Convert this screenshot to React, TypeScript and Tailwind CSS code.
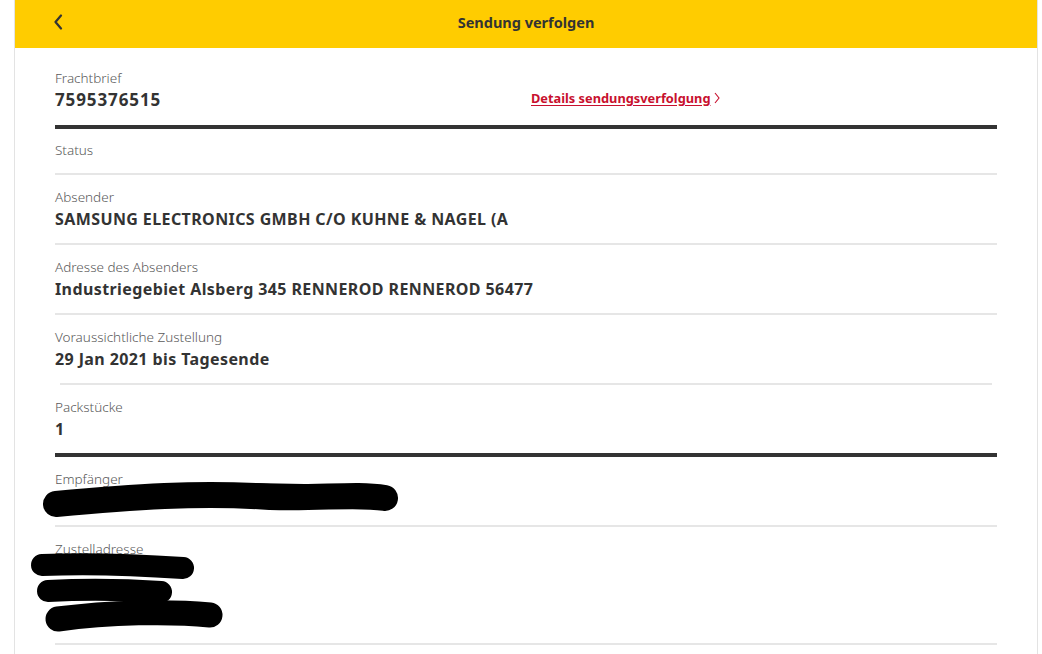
import React from "react";

type Row = { label: string; value?: string; divider: "thin" | "thick" | "inset" };

const rows: Row[] = [
  { label: "Status", divider: "thin" },
  { label: "Absender", value: "SAMSUNG ELECTRONICS GMBH C/O KUHNE & NAGEL (A", divider: "thin" },
  { label: "Adresse des Absenders", value: "Industriegebiet Alsberg 345 RENNEROD RENNEROD 56477", divider: "thin" },
  { label: "Voraussichtliche Zustellung", value: "29 Jan 2021 bis Tagesende", divider: "inset" },
  { label: "Packstücke", value: "1", divider: "thick" },
];

function Divider({ kind }: { kind: Row["divider"] }) {
  if (kind === "thick") return <div className="h-[4px] bg-[#333333]" />;
  if (kind === "inset") return <div className="h-[2px] bg-[#e6e6e6] mx-[5px]" />;
  return <div className="h-[2px] bg-[#e6e6e6]" />;
}

function Label({ children }: { children: React.ReactNode }) {
  return <div className="text-[13.5px] leading-[20px] font-light text-[#5a5a5a]">{children}</div>;
}

function Value({ children }: { children: React.ReactNode }) {
  return <div className="text-[16px] leading-[24px] font-bold tracking-[0.4px] text-[#333333]">{children}</div>;
}

export default function App() {
  return (
    <div className="min-h-[654px] bg-white" style={{ fontFamily: '"Noto Sans", "Open Sans", sans-serif' }}>
      <div className="ml-[14px] w-[1024px] min-h-[654px] border-x border-[#e3e3e3]">
        {/* Header */}
        <div className="h-[48px] bg-[#ffcc00] flex items-center">
          <div className="pl-[38px] pb-[4px]">
            <svg width="10" height="16" viewBox="0 0 10 16">
              <path d="M8 1.5 L2.5 8 L8 14.5" fill="none" stroke="#333" strokeWidth="2.2" strokeLinecap="round" strokeLinejoin="round" />
            </svg>
          </div>
          <div className="flex-1 text-center pr-[48px] pb-[2px] text-[14.5px] font-bold text-[#333333]">
            Sendung verfolgen
          </div>
        </div>

        <div className="px-10">
          {/* Frachtbrief */}
          <div className="flex pt-[20px] pb-[13px]">
            <div className="w-1/2">
              <Label>Frachtbrief</Label>
              <div className="text-[17px] leading-[24px] font-bold tracking-[0.9px] text-[#333333]">7595376515</div>
            </div>
            <div className="w-1/2 pl-[5px] pt-[17px]">
              <span className="inline-flex items-center gap-[4px] text-[12.8px] leading-[20px] font-bold text-[#c8102e]">
                <span className="underline underline-offset-2">Details sendungsverfolgung</span>
                <svg width="6" height="12" viewBox="0 0 6 12">
                  <path d="M1 1 L5 6 L1 11" fill="none" stroke="#c8102e" strokeWidth="1.1" />
                </svg>
              </span>
            </div>
          </div>
          <Divider kind="thick" />

          {rows.map((r) => (
            <div key={r.label}>
              <div className={r.value ? "pt-[12px] pb-[12px]" : "pt-[11px] pb-[13px]"}>
                <Label>{r.label}</Label>
                {r.value && <Value>{r.value}</Value>}
              </div>
              <Divider kind={r.divider} />
            </div>
          ))}

          {/* Empfänger (redacted) */}
          <div className="pt-[12px] pb-[12px] relative">
            <Label>Empfänger</Label>
            <div className="h-[24px]" />
            <svg className="absolute left-[-15px] top-[18px]" width="380" height="46" viewBox="0 0 380 46">
              <path d="M16 29 C 90 22, 160 17, 230 22 C 280 24, 315 18, 345 23" fill="none" stroke="#000" strokeWidth="26" strokeLinecap="round" />
              <path d="M30 24 C 120 12, 220 14, 322 18" fill="none" stroke="#000" strokeWidth="14" strokeLinecap="round" />
            </svg>
          </div>
          <Divider kind="thin" />

          {/* Zustelladresse (redacted) */}
          <div className="pt-[12px] pb-[12px] relative">
            <Label>Zustelladresse</Label>
            <div className="h-[72px]" />
            <svg className="absolute left-[-25px] top-[24px]" width="220" height="100" viewBox="0 0 220 100">
              <path d="M12 14 C 60 12, 110 14, 153 17" fill="none" stroke="#000" strokeWidth="22" strokeLinecap="round" />
              <path d="M18 40 C 60 38, 100 39, 131 41" fill="none" stroke="#000" strokeWidth="22" strokeLinecap="round" />
              <path d="M28 68 C 80 61, 140 60, 180 64" fill="none" stroke="#000" strokeWidth="25" strokeLinecap="round" />
            </svg>
          </div>
          <Divider kind="thin" />
        </div>
      </div>
    </div>
  );
}
